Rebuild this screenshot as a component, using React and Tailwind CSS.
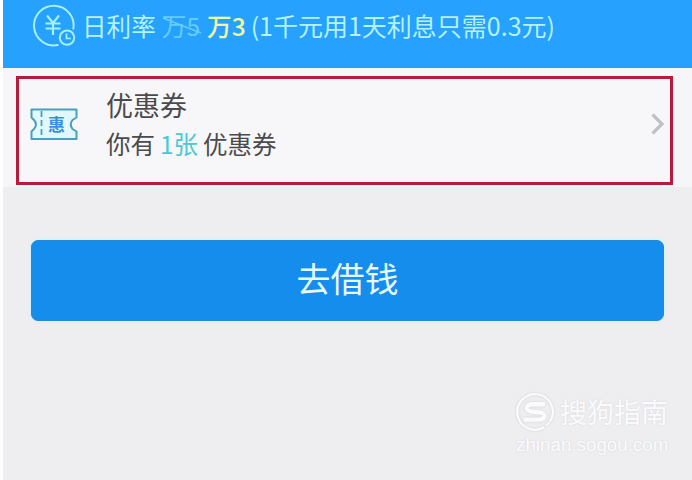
function RateIcon() {
  return (
    <svg className="ml-[27px] mt-[4px] h-[44px] w-[46px] shrink-0" viewBox="0 0 46 44" fill="none" stroke="#a5f1fb" strokeWidth="2">
      <path d="M43.2 25.5A19.8 19.8 0 1 0 28.5 40.8" />
      <path d="M17 11.5l6 7.5 6-7.5M15.5 19.5h15M15.5 24.5h15M23 19v12" strokeWidth="2.2" />
      <circle cx="37" cy="33.6" r="7.2" />
      <path d="M36.5 29.5v5h4.5" strokeWidth="1.7" />
    </svg>
  );
}

function TicketIcon() {
  return (
    <div className="relative ml-[10px] mt-[29px] h-[33px] w-[50px] shrink-0">
      <svg className="h-full w-full" viewBox="0 0 50 33" fill="#e2f8ff" stroke="#4b9fbc" strokeWidth="2">
        <path d="M2.5 1.5H47.5V9.5L43.5 12Q40 16.5 43.5 21L47.5 23.5V31H2.5V23.5L5 21Q9 16.5 5 12L2.5 9.5Z" strokeLinejoin="round" />
        <path d="M12.5 3v27" strokeDasharray="6 3" strokeWidth="1.8" />
      </svg>
      <span className="absolute left-[19px] top-[7px] text-[17px] font-bold leading-[17px] text-[#388fdc]">惠</span>
    </div>
  );
}

function Watermark() {
  return (
    <div className="ml-auto mr-[21px] mt-[70px] w-[155px] text-[#fbfbfd] [text-shadow:0_0_2px_#d3d2d6]">
      <div className="flex h-[42px] items-center">
        <svg className="-ml-px h-[40px] w-[40px] shrink-0 drop-shadow-[0_0_1px_#cfced2]" viewBox="0 0 40 40" fill="none" stroke="#fbfbfd">
          <path d="M29 35.3A17.8 17.8 0 1 1 34.8 29.9" strokeWidth="2.2" />
          <path d="M31 33.6l3.2-3.2" strokeWidth="2" />
          <path d="M30 12.2H18C9.5 12.2 10 19.2 17.5 19.6L23.5 20.2C31.5 20.8 31 27.6 23 27.6H8.5" strokeWidth="4.4" />
        </svg>
        <span className="ml-[5px] whitespace-nowrap text-[27px] leading-[40px]">搜狗指南</span>
      </div>
      <div className="whitespace-nowrap font-['Liberation_Sans','Noto_Sans_CJK_SC',sans-serif] text-[18.8px] leading-[24px]">zhinan.sogou.com</div>
    </div>
  );
}

export default function App() {
  return (
    <div className="h-[480px] w-[692px] overflow-hidden bg-white pl-[3px] font-['Noto_Sans_CJK_SC',sans-serif]">
      <div className="flex h-full flex-col bg-[#eeedf0]">
        <header className="flex h-[68px] shrink-0 items-start whitespace-nowrap bg-[#26a1fd] text-[24.6px] leading-[36px] text-[#b5f2fa]">
          <RateIcon />
          <span className="ml-[6px] mt-[7px]">日利率</span>
          <span className="relative ml-[6px] mt-[7px] text-[#65cdfb]">
            万5
            <svg className="absolute left-0 top-[8px] h-[20px] w-[40px]" viewBox="0 0 40 20" fill="none" stroke="#65cdfb" strokeWidth="1.4">
              <path d="M1 3L39 18" />
            </svg>
          </span>
          <span className="ml-[7px] mt-[7px] font-medium text-[#f3f7a0]">万3</span>
          <span className="ml-[5px] mt-[7px] text-[25px]">(1千元用1天利息只需0.3元)</span>
        </header>
        <section className="h-[119px] shrink-0 bg-[#f6f6f8] pl-[13px] pt-[8px]">
          <div className="flex h-[109px] w-[657px] border-[3px] border-[#b51b3b] bg-[#f7f6f9]">
            <TicketIcon />
            <div className="ml-[27px] mt-[6px] whitespace-nowrap text-[#4b4b4d]">
              <div className="text-[27px] leading-[40px]">优惠券</div>
              <div className="flex gap-[5px] text-[24.5px] leading-[37px]">
                <span>你有</span>
                <span className="text-[#4ac9d3]">1张</span>
                <span>优惠券</span>
              </div>
            </div>
            <svg className="ml-auto mr-[5px] mt-[34px] h-[22px] w-[14px]" viewBox="0 0 14 22" fill="none" stroke="#c1c1c3" strokeWidth="3.2">
              <path d="M1.5 1.5l9.5 9.5-9.5 9.5" />
            </svg>
          </div>
        </section>
        <button className="ml-[28px] mt-[53px] flex h-[81px] w-[633px] shrink-0 items-center justify-center rounded-[7px] border border-[#248bd3] bg-[#148ded] pb-[5px] text-[34px] leading-[50px] text-[#e6f9ff] shadow-[0_0_2px_1px_#d5f4fc]">
          去借钱
        </button>
        <Watermark />
      </div>
    </div>
  );
}
